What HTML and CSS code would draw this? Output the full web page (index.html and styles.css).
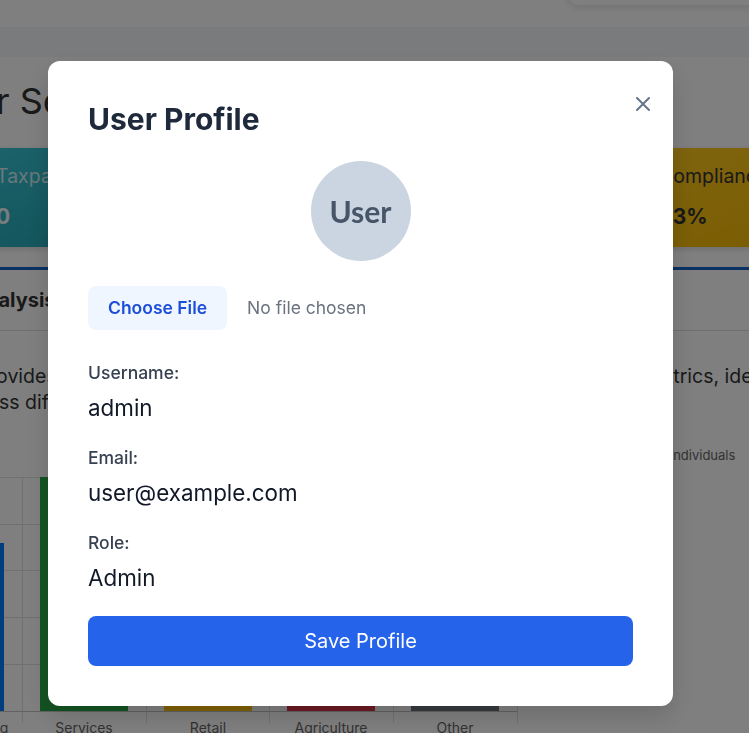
FILE: index.html
```html
<!DOCTYPE html>
<html lang="en">
<head>
<meta charset="utf-8">
<title>User Profile</title>
<link rel="stylesheet" href="styles.css">
</head>
<body>
<div class="page">
  <header class="topbar">
    <div class="user-menu"></div>
  </header>
  <nav class="subnav"></nav>
  <main class="main">
    <h1 class="page-title">Taxpayer Services</h1>
    <div class="stats">
      <div class="stat stat-teal">
        <div class="stat-label">Taxpayers</div>
        <div class="stat-value">0</div>
      </div>
      <div class="stat stat-blue">
        <div class="stat-label">Revenue</div>
        <div class="stat-value">$0</div>
      </div>
      <div class="stat stat-green">
        <div class="stat-label">Returns Filed</div>
        <div class="stat-value">0</div>
      </div>
      <div class="stat stat-yellow">
        <div class="stat-label">Compliance Rate</div>
        <div class="stat-value">83%</div>
      </div>
    </div>
    <section class="panel">
      <div class="panel-head">
        <h2 class="panel-title">Sector Analysis</h2>
      </div>
      <div class="panel-body">
        <p class="intro">This report provides a detailed breakdown of key taxpayer compliance and revenue metrics, identifying<br>patterns, across different sectors of the economy.</p>
        <div class="charts">
          <svg class="bar-chart" width="680" height="290" viewBox="0 0 680 290">
            <g stroke="#e0e0e0" stroke-width="1">
              <line x1="38" y1="32.5" x2="657" y2="32.5"/>
              <line x1="38" y1="79.5" x2="657" y2="79.5"/>
              <line x1="38" y1="125.5" x2="657" y2="125.5"/>
              <line x1="38" y1="172.5" x2="657" y2="172.5"/>
              <line x1="38" y1="219.5" x2="657" y2="219.5"/>
              <line x1="38.5" y1="32" x2="38.5" y2="278"/>
              <line x1="162.5" y1="32" x2="162.5" y2="278"/>
              <line x1="286.5" y1="32" x2="286.5" y2="278"/>
              <line x1="409.5" y1="32" x2="409.5" y2="278"/>
              <line x1="533.5" y1="32" x2="533.5" y2="278"/>
              <line x1="657.5" y1="32" x2="657.5" y2="278"/>
            </g>
            <rect x="56" y="98" width="88" height="168" fill="#007bff"/>
            <rect x="180" y="32" width="88" height="234" fill="#28a745"/>
            <rect x="304" y="140" width="88" height="126" fill="#ffc107"/>
            <rect x="427" y="190" width="88" height="76" fill="#dc3545"/>
            <rect x="551" y="225" width="88" height="41" fill="#6c757d"/>
            <line x1="30" y1="266.5" x2="657" y2="266.5" stroke="#c4c4c4" stroke-width="1"/>
            <g font-size="14" fill="#666" text-anchor="middle">
              <text x="100" y="288">Manufacturing</text>
              <text x="224" y="288">Services</text>
              <text x="348" y="288">Retail</text>
              <text x="471" y="288">Agriculture</text>
              <text x="595" y="288">Other</text>
            </g>
            <g font-size="12" fill="#666" text-anchor="end">
              <text x="30" y="36">500</text>
              <text x="30" y="83">400</text>
              <text x="30" y="130">300</text>
              <text x="30" y="176">200</text>
              <text x="30" y="223">100</text>
              <text x="30" y="270">0</text>
            </g>
          </svg>
          <div class="pie-chart">
            <div class="legend">
              <span class="swatch swatch-blue"></span><span>Businesses</span>
              <span class="swatch swatch-green"></span><span>Individuals</span>
            </div>
          </div>
        </div>
      </div>
    </section>
  </main>
</div>

<div class="overlay">
  <div class="modal" role="dialog" aria-labelledby="profile-title">
    <button class="close" type="button" aria-label="Close">
      <svg width="14" height="14" viewBox="0 0 14 14"><path d="M1 1L13 13M13 1L1 13" stroke="currentColor" stroke-width="2" stroke-linecap="round"/></svg>
    </button>
    <h2 class="modal-title" id="profile-title">User Profile</h2>
    <div class="avatar">User</div>
    <div class="file-row">
      <input class="file-input" type="file" accept="image/*">
    </div>
    <div class="field">
      <div class="field-label">Username:</div>
      <div class="field-value">admin</div>
    </div>
    <div class="field">
      <div class="field-label">Email:</div>
      <div class="field-value">user@example.com</div>
    </div>
    <div class="field">
      <div class="field-label">Role:</div>
      <div class="field-value">Admin</div>
    </div>
    <button class="save" type="button">Save Profile</button>
  </div>
</div>
</body>
</html>
```

FILE: styles.css
```css
* { box-sizing: border-box; }

html, body {
  margin: 0;
  height: 100%;
}

body {
  font-family: Inter, "Noto Sans", "Liberation Sans", sans-serif;
  background: #ffffff;
  color: #333333;
  overflow: hidden;
}

/* ---------- background page ---------- */
.page {
  width: 749px;
  min-height: 733px;
}

.topbar {
  position: relative;
  height: 27px;
  background: #ffffff;
}

.user-menu {
  position: absolute;
  top: -40px;
  left: 566px;
  width: 260px;
  height: 45px;
  background: #ffffff;
  border-radius: 14px;
  box-shadow: 0 2px 8px rgba(0, 0, 0, 0.12);
}

.subnav {
  height: 30px;
  background: #f4f6f8;
}

.page-title {
  margin: 22px 0 25px -147px;
  font-size: 36px;
  font-weight: 400;
  line-height: 44px;
  color: #333333;
  white-space: nowrap;
}

.stats {
  display: flex;
  gap: 20px;
  height: 99px;
  margin-left: -24px;
}

.stat {
  flex: 0 0 201px;
  padding: 16px 20px;
  border-radius: 8px;
  box-shadow: 0 2px 6px rgba(0, 0, 0, 0.15);
  white-space: nowrap;
}

.stat-label {
  margin-bottom: 14px;
  font-size: 19.5px;
  line-height: 24px;
}

.stat-value {
  font-size: 21px;
  font-weight: 700;
  line-height: 30px;
}

.stat-teal {
  background: linear-gradient(160deg, #38c6d8, #22a2ad);
  color: rgba(255, 255, 255, 0.78);
}
.stat-teal .stat-value { color: rgba(255, 255, 255, 0.95); }

.stat-blue {
  background: linear-gradient(160deg, #4a90e2, #2f6fc4);
  color: #ffffff;
}

.stat-green {
  background: linear-gradient(160deg, #34c26a, #23a152);
  color: #ffffff;
}

.stat-yellow {
  background: linear-gradient(160deg, #ffca20, #f5b800);
  color: #333333;
}

.panel {
  width: 800px;
  margin: 20px 0 0 -23px;
  background: #ffffff;
  border-top: 3px solid #1464c8;
  box-shadow: 0 2px 6px rgba(0, 0, 0, 0.08);
}

.panel-head {
  padding: 16px 24px;
  border-bottom: 1px solid #dedede;
}

.panel-title {
  margin: 0 0 0 -99px;
  font-size: 20px;
  font-weight: 700;
  line-height: 28px;
  color: #333333;
  white-space: nowrap;
}

.panel-body {
  padding: 32px 24px 0;
}

.intro {
  margin: 0 0 30px -130px;
  font-size: 19.5px;
  line-height: 26px;
  color: #333333;
  white-space: nowrap;
}

.charts {
  display: flex;
  margin-left: -141px;
}

.bar-chart {
  display: block;
  flex: 0 0 680px;
  font-family: Inter, "Noto Sans", sans-serif;
}

.pie-chart {
  flex: 1;
  margin-left: 10px;
}

.legend {
  display: flex;
  align-items: center;
  gap: 6px;
  height: 20px;
  font-size: 13px;
  color: #666666;
  white-space: nowrap;
}

.swatch {
  width: 12px;
  height: 12px;
  display: inline-block;
}
.swatch-blue { background: #007bff; }
.swatch-green { background: #28a745; margin-left: 8px; }

/* ---------- modal ---------- */
.overlay {
  position: fixed;
  inset: 0;
  padding: 61px 0 0 48px;
  background: rgba(0, 0, 0, 0.5);
}

.modal {
  position: relative;
  width: 625px;
  padding: 40px;
  background: #ffffff;
  border-radius: 12px;
  box-shadow: 0 10px 25px rgba(0, 0, 0, 0.15);
}

.close {
  position: absolute;
  top: 31px;
  right: 18px;
  width: 24px;
  height: 24px;
  padding: 0;
  display: flex;
  align-items: center;
  justify-content: center;
  border: 0;
  background: transparent;
  color: #64748b;
  cursor: pointer;
}

.modal-title {
  margin: 0 0 24px;
  font-size: 30px;
  font-weight: 700;
  line-height: 36px;
  color: #1e293b;
}

.avatar {
  width: 100px;
  height: 100px;
  margin: 0 auto 25px;
  display: flex;
  align-items: center;
  justify-content: center;
  border-radius: 50%;
  background: #cbd5e1;
  font-family: Lato, "Noto Sans", sans-serif;
  font-size: 30px;
  font-weight: 700;
  color: #475569;
}

.file-row {
  height: 44px;
  margin-bottom: 31px;
}

.file-input {
  font-family: Inter, "Noto Sans", sans-serif;
  font-size: 17.5px;
  color: #6b7280;
}

.file-input::file-selector-button {
  margin-right: 20px;
  padding: 12px 20px;
  border: 0;
  border-radius: 8px;
  background: #eff6ff;
  color: #1d4ed8;
  font-family: Inter, "Noto Sans", sans-serif;
  font-size: 17.5px;
  font-weight: 600;
  line-height: 20px;
  cursor: pointer;
}

.field {
  margin-bottom: 23px;
}

.field-label {
  margin-bottom: 8px;
  font-size: 17.5px;
  font-weight: 500;
  line-height: 24px;
  color: #374151;
}

.field-value {
  font-size: 22.4px;
  line-height: 30px;
  color: #111827;
}

.save {
  display: block;
  width: 100%;
  height: 50px;
  border: 0;
  border-radius: 8px;
  background: #2563eb;
  color: #ffffff;
  font-family: Inter, "Noto Sans", sans-serif;
  font-size: 20px;
  font-weight: 400;
  cursor: pointer;
}
```
